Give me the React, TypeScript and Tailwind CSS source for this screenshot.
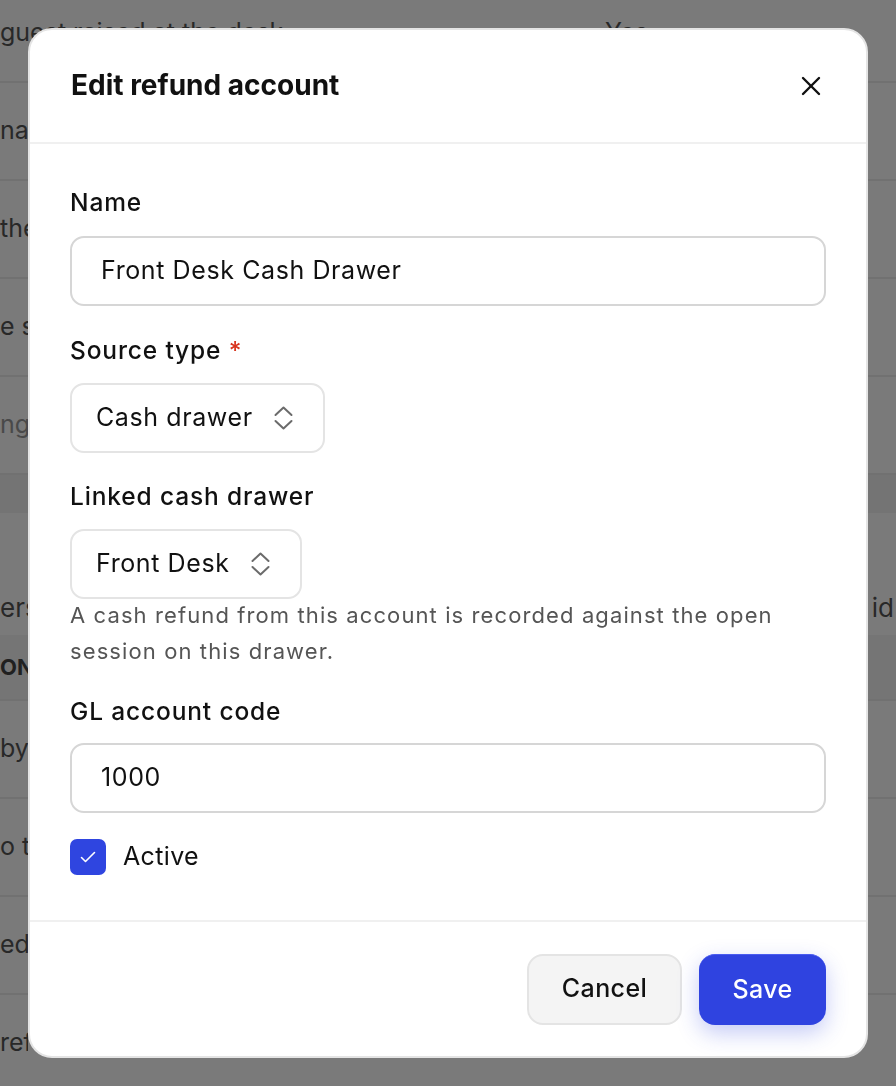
import React from "react";

function ChevronsUpDown() {
  return (
    <svg width="19" height="24" viewBox="0 0 19 24" fill="none" stroke="#6b6b6b" strokeWidth="2" strokeLinecap="round" strokeLinejoin="round">
      <path d="M1.5 9 L9.5 1.5 L17.5 9" />
      <path d="M1.5 15 L9.5 22.5 L17.5 15" />
    </svg>
  );
}

function BgRow({ left, right, muted, clip }: { left: string; right?: string; muted?: boolean; clip?: boolean }) {
  return (
    <div className="h-[98px] border-b-2 border-[#ececec] flex items-center">
      <div className={`${clip ? "w-[28px]" : "w-[605px]"} whitespace-nowrap overflow-hidden ${muted ? "text-[#9a9a9a]" : "text-[#555]"}`}>{left}</div>
      {right ? <div className="text-[#555]">{right}</div> : null}
    </div>
  );
}

export default function App() {
  return (
    <div className="relative min-h-screen overflow-hidden bg-white [font-family:Inter,'Noto_Sans',sans-serif] text-[25px]">
      {/* background page */}
      <div className="-mt-[15px]">
        <BgRow left="guest raised at the desk" right="Yes" />
        <BgRow left="nager approval" clip />
        <BgRow left=" the" clip />
        <BgRow left="e s" clip />
        <BgRow left="ng" muted clip />
        <div className="h-[38px] bg-[#f2f2f2]" />
        <div className="h-[122px] flex items-end justify-between pb-[8px]">
          <span className="text-[#555] text-[26px] w-[28px] overflow-hidden whitespace-nowrap">ers</span>
          <span className="text-[#555] text-[26px] pr-[2px]">id</span>
        </div>
        <div className="h-[66px] bg-[#f5f5f5] border-b-2 border-[#ececec] flex items-center font-bold text-[#444] text-[22px]">
          <span className="w-[28px] overflow-hidden whitespace-nowrap">ON</span>
        </div>
        <BgRow left="by t" clip />
        <BgRow left="o th" clip />
        <BgRow left="ed" clip />
        <BgRow left="ref" clip />
      </div>

      {/* overlay */}
      <div className="fixed inset-0 bg-black/[0.52] p-[28px]">
        <div className="h-full bg-white rounded-[24px] border-2 border-[#e4e4e4] flex flex-col overflow-hidden">
          {/* header */}
          <div className="h-[114px] shrink-0 border-b-2 border-[#f0f0f0] flex items-center justify-between pl-[41px] pr-[44px]">
            <h2 className="text-[28px] font-bold text-[#111] tracking-[0px] -mt-[2px]">Edit refund account</h2>
            <svg width="22" height="22" viewBox="0 0 22 22" fill="none" stroke="#111" strokeWidth="2.4" strokeLinecap="round">
              <path d="M3 3 L19 19" />
              <path d="M19 3 L3 19" />
            </svg>
          </div>

          {/* body */}
          <div className="flex-1 px-[40px] pt-[42px]">
            <div className="text-[24.5px] leading-[32px] font-medium text-[#111] tracking-[0.85px]">Name</div>
            <div className="mt-[18px] h-[70px] rounded-[14px] border-2 border-[#d6d6d6] flex items-center pl-[29px] text-[25px] tracking-[0.6px] text-[#111]">
              Front Desk Cash Drawer
            </div>

            <div className="mt-[28px] text-[24.5px] leading-[32px] font-medium text-[#111] tracking-[0.85px]">
              Source type <span className="text-[#d8341e]">*</span>
            </div>
            <div className="mt-[17px] h-[70px] inline-flex items-center rounded-[14px] border-2 border-[#e4e4e4] pl-[24px] pr-[30px] gap-[21px] text-[25px] tracking-[0.6px] text-[#111]">
              <span>Cash drawer</span>
              <ChevronsUpDown />
            </div>

            <div className="mt-[27px] text-[24.5px] leading-[32px] font-medium text-[#111] tracking-[0.85px]">Linked cash drawer</div>
            <div className="mt-[17px] h-[70px] inline-flex items-center rounded-[14px] border-2 border-[#e4e4e4] pl-[24px] pr-[30px] gap-[21px] text-[25px] tracking-[0.6px] text-[#111]">
              <span>Front Desk</span>
              <ChevronsUpDown />
            </div>
            <p className="text-[22px] leading-[36px] text-[#555] tracking-[1.1px] -mt-[2px]">
              A cash refund from this account is recorded against the open session on this drawer.
            </p>

            <div className="mt-[26px] text-[24.5px] leading-[32px] font-medium text-[#111] tracking-[0.85px]">GL account code</div>
            <div className="mt-[16px] h-[70px] rounded-[14px] border-2 border-[#d6d6d6] flex items-center pl-[29px] text-[25px] tracking-[0.6px] text-[#111]">
              1000
            </div>

            <div className="mt-[25px] flex items-center gap-[17px]">
              <div className="w-[36px] h-[36px] rounded-[7px] bg-[#2f45e0] flex items-center justify-center">
                <svg width="16" height="12" viewBox="0 0 16 12" fill="none" stroke="#fff" strokeWidth="1.6" strokeLinecap="round" strokeLinejoin="round">
                  <path d="M1.5 6.5 L5.5 10.5 L14.5 1.5" />
                </svg>
              </div>
              <span className="text-[25px] tracking-[0.35px] text-[#111]">Active</span>
            </div>
          </div>

          {/* footer */}
          <div className="h-[136px] shrink-0 border-t-2 border-[#f0f0f0] flex items-center justify-end gap-[17px] px-[40px]">
            <button className="h-[71px] w-[155px] rounded-[16px] bg-[#f4f4f4] border-2 border-[#e4e4e4] text-[25px] tracking-[0.4px] font-medium text-[#111]">
              Cancel
            </button>
            <button className="h-[71px] w-[127px] rounded-[16px] bg-[#2f43e0] text-[25px] tracking-[0.4px] font-medium text-white shadow-[0_8px_22px_rgba(47,67,224,0.28)] border-t border-[#4a5cf0]">
              Save
            </button>
          </div>
        </div>
      </div>
    </div>
  );
}
